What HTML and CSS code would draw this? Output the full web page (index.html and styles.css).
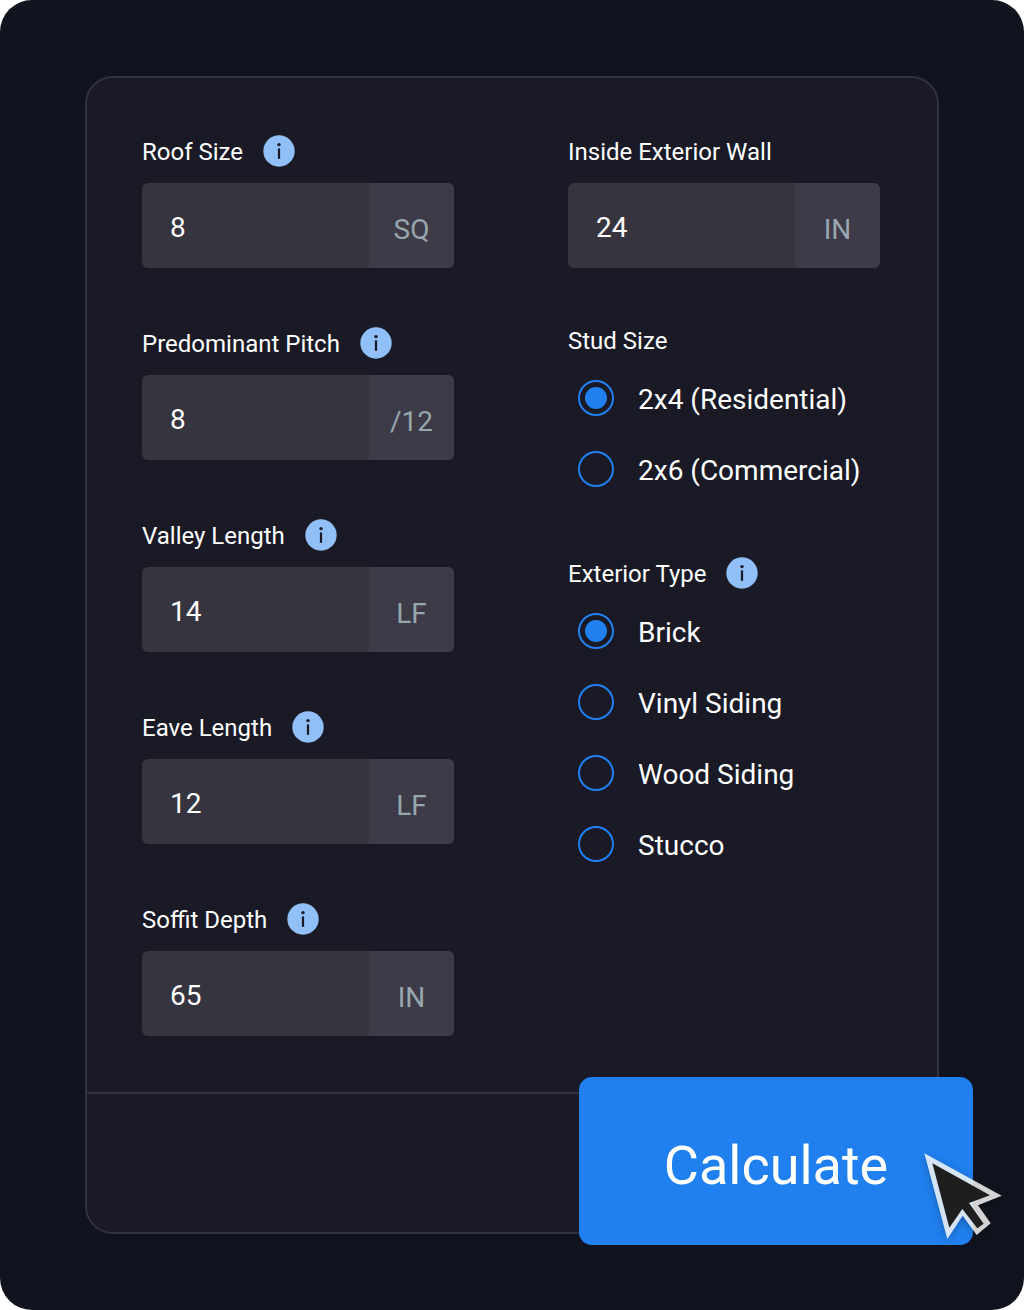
FILE: index.html
```html
<!DOCTYPE html>
<html lang="en">

<head>
    <meta charset="utf-8">
    <meta name="viewport" content="width=device-width, initial-scale=1">
    <title>Calculate</title>
    <link rel="stylesheet" href="styles.css">
</head>

<body>
    <!-- shared info icon -->
    <svg class="sprite" width="0" height="0" aria-hidden="true">
        <symbol id="info" viewBox="0 0 32 32">
            <circle cx="16" cy="16" r="15.7" fill="#91c0f8" />
            <circle cx="16" cy="9.6" r="1.7" fill="#191a26" />
            <rect x="14.9" y="13.4" width="2.2" height="10.4" fill="#191a26" />
        </symbol>
    </svg>

    <main class="stage">
        <form class="card" onsubmit="return false;">
            <div class="columns">
                <div class="column">
                    <div class="field">
                        <div class="heading">
                            <label for="roof">Roof Size</label>
                            <button type="button" class="info" aria-label="Info"><svg><use href="#info" /></svg></button>
                        </div>
                        <div class="control">
                            <input type="text" class="value" id="roof" name="roof" value="8">
                            <span class="unit">SQ</span>
                        </div>
                    </div>

                    <div class="field">
                        <div class="heading">
                            <label for="pitch">Predominant Pitch</label>
                            <button type="button" class="info" aria-label="Info"><svg><use href="#info" /></svg></button>
                        </div>
                        <div class="control">
                            <input type="text" class="value" id="pitch" name="pitch" value="8">
                            <span class="unit">/12</span>
                        </div>
                    </div>

                    <div class="field">
                        <div class="heading">
                            <label for="valley">Valley Length</label>
                            <button type="button" class="info" aria-label="Info"><svg><use href="#info" /></svg></button>
                        </div>
                        <div class="control">
                            <input type="text" class="value" id="valley" name="valley" value="14">
                            <span class="unit">LF</span>
                        </div>
                    </div>

                    <div class="field">
                        <div class="heading">
                            <label for="eave">Eave Length</label>
                            <button type="button" class="info" aria-label="Info"><svg><use href="#info" /></svg></button>
                        </div>
                        <div class="control">
                            <input type="text" class="value" id="eave" name="eave" value="12">
                            <span class="unit">LF</span>
                        </div>
                    </div>

                    <div class="field">
                        <div class="heading">
                            <label for="soffit">Soffit Depth</label>
                            <button type="button" class="info" aria-label="Info"><svg><use href="#info" /></svg></button>
                        </div>
                        <div class="control">
                            <input type="text" class="value" id="soffit" name="soffit" value="65">
                            <span class="unit">IN</span>
                        </div>
                    </div>
                </div>

                <div class="column choices">
                    <div class="field">
                        <div class="heading">
                            <label for="wall">Inside Exterior Wall</label>
                        </div>
                        <div class="control">
                            <input type="text" class="value" id="wall" name="wall" value="24">
                            <span class="unit">IN</span>
                        </div>
                    </div>

                    <fieldset class="group">
                        <legend class="heading"><span>Stud Size</span></legend>
                        <label class="option"><input type="radio" name="stud" checked><span>2x4 (Residential)</span></label>
                        <label class="option"><input type="radio" name="stud"><span>2x6 (Commercial)</span></label>
                    </fieldset>

                    <fieldset class="group">
                        <legend class="heading">
                            <span>Exterior Type</span>
                            <button type="button" class="info" aria-label="Info"><svg><use href="#info" /></svg></button>
                        </legend>
                        <label class="option"><input type="radio" name="exterior" checked><span>Brick</span></label>
                        <label class="option"><input type="radio" name="exterior"><span>Vinyl Siding</span></label>
                        <label class="option"><input type="radio" name="exterior"><span>Wood Siding</span></label>
                        <label class="option"><input type="radio" name="exterior"><span>Stucco</span></label>
                    </fieldset>
                </div>
            </div>

            <div class="footer"></div>

            <div class="action">
                <button type="submit" class="calculate">Calculate</button>
                <svg class="cursor" viewBox="60 60 288 288" aria-hidden="true">
                    <path d="M73 70L305 197L234 226L272 280L230 315L188 257L142 327Z" fill="#fff" fill-opacity="0.82" />
                    <path d="M97 100L270 196L207 219L251 281L232 295L187 237L148 293Z" fill="#1e1e1e" />
                </svg>
            </div>
        </form>
    </main>
</body>

</html>
```

FILE: styles.css
```css
* {
    box-sizing: border-box;
}

body {
    margin: 0;
    background-color: #fff;
    color: #fff;
    font-family: Roboto, "Liberation Sans", sans-serif;
    font-size: 28px;
}

button,
input {
    font-family: inherit;
    color: inherit;
}

.sprite {
    position: absolute;
}

.stage {
    min-height: 100vh;
    padding: 76px 85px;
    background-color: #11131e;
    border-radius: 32px;
}

.card {
    position: relative;
    background-color: #191a26;
    border: 2px solid #32313e;
    border-radius: 28px;
}

.columns {
    display: grid;
    grid-template-columns: minmax(0, 1fr) minmax(0, 1fr);
    gap: 114px;
    padding: 57px 57px 56px 55px;
}

.column {
    display: flex;
    flex-direction: column;
    gap: 59px;
}

.choices {
    gap: 56px;
}

.heading {
    display: flex;
    align-items: center;
    gap: 20px;
    height: 32px;
    padding: 0;
    margin-bottom: 16px;
    font-size: 24px;
    line-height: 30px;
    white-space: nowrap;
}

.heading label,
.heading span {
    padding-top: 2px;
}

.info {
    width: 32px;
    height: 32px;
    padding: 0;
    border: none;
    background: none;
    cursor: pointer;
}

.info svg {
    display: block;
    width: 32px;
    height: 32px;
}

.control {
    display: flex;
    height: 85px;
    border-radius: 6px;
    background-color: #35343f;
    overflow: hidden;
}

.value {
    flex: 1;
    min-width: 0;
    padding: 4px 28px 0;
    border: none;
    background: none;
    font-size: 28px;
}

.unit {
    display: flex;
    align-items: center;
    justify-content: center;
    flex: none;
    width: 85px;
    padding-top: 8px;
    background-color: #3c3b47;
    color: #98a6ae;
}

.group {
    display: flex;
    flex-direction: column;
    gap: 35px;
    min-width: 0;
    margin: 0 0 14px;
    padding: 0;
    border: none;
}

.group .heading {
    margin-bottom: 24px;
}

.option {
    display: flex;
    align-items: center;
    gap: 24px;
    height: 36px;
    padding-left: 10px;
    white-space: nowrap;
}

.option span {
    padding-top: 2px;
}

.option input {
    appearance: none;
    flex: none;
    width: 36px;
    height: 36px;
    margin: 0;
    border: 2px solid #2080ef;
    border-radius: 50%;
}

.option input:checked {
    padding: 5px;
    background-color: #2080ef;
    background-clip: content-box;
}

.footer {
    height: 140px;
    border-top: 2px solid #32313e;
}

.action {
    position: absolute;
    right: -36px;
    bottom: -13px;
    width: 394px;
    height: 168px;
}

.calculate {
    width: 100%;
    height: 100%;
    padding: 8px 0 0;
    border: none;
    border-radius: 13px;
    background-color: #2080ef;
    font-size: 54px;
    cursor: pointer;
}

.cursor {
    position: absolute;
    right: -43px;
    bottom: -1px;
    width: 96px;
    height: 96px;
    filter: drop-shadow(0 2px 4px rgba(0, 0, 0, 0.3));
}
```
